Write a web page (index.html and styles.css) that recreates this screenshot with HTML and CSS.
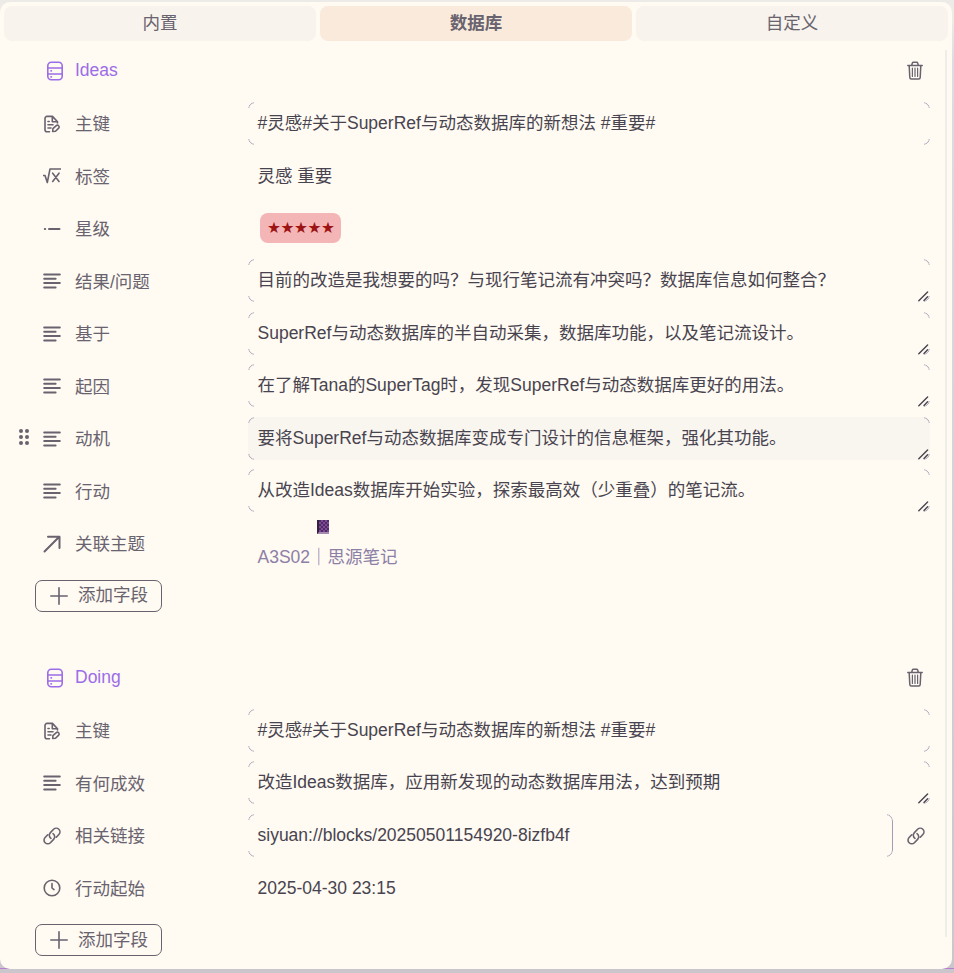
FILE: index.html
```
<!DOCTYPE html>
<html lang="zh-CN">
<head>
  <meta charset="utf-8">
  <meta name="viewport" content="width=device-width, initial-scale=1">
  <title>Ideas</title>
  <link rel="stylesheet" href="styles.css">
</head>
<body>
  <svg class="symbols">
    <symbol id="icon-database" viewBox="0 0 18 20">
      <rect x="1.8" y="1.2" width="14.4" height="17.6" rx="3.5"/>
      <path d="M2 7h14M2 13h14"/>
      <path d="M5 9.9h.4M5 15.9h.4"/>
    </symbol>
    <symbol id="icon-key" viewBox="0 0 18 18">
      <path d="M6.5 16.8H4a2 2 0 0 1-2-2V3.4a2 2 0 0 1 2-2h5.5l5 5.4V8M9.3 1.6v5.2h5M5 6.5h1.2M5 9.8h5M5 13h3"/>
      <path d="M9.7 16.5l.2-2.8 3.4-3a1.7 1.7 0 0 1 2.4 2.4l-3.2 3.2z"/>
    </symbol>
    <symbol id="icon-math" viewBox="0 0 18 18">
      <path d="M.5 8.5h1.5l2.3 7L7 2h10.5M9.7 6.2l6.3 8.3M16 6.2l-6.3 8.3"/>
    </symbol>
    <symbol id="icon-select" viewBox="0 0 18 18">
      <path d="M1.8 9h.4M6 9h10.5"/>
    </symbol>
    <symbol id="icon-text" viewBox="0 0 18 18">
      <path d="M1.2 2.5h15.6M1.2 6.8h11.4M1.2 11.1h15.6M1.2 15.4h11.4"/>
    </symbol>
    <symbol id="icon-relation" viewBox="0 0 18 18">
      <path d="M1.5 16.5L16 2M5 1.8H16.5V13"/>
    </symbol>
    <symbol id="icon-link" viewBox="0 0 18 18">
      <path d="M8 11.4a3.8 3.8 0 0 1-.6-5.8l3.2-3.3a3.7 3.7 0 0 1 5.3 5.2l-2.6 2.7M10 6.6a3.8 3.8 0 0 1 .6 5.8l-3.2 3.3a3.7 3.7 0 0 1-5.3-5.2l2.6-2.7"/>
    </symbol>
    <symbol id="icon-clock" viewBox="0 0 18 18">
      <circle cx="9" cy="9" r="7.8"/>
      <path d="M9 4.5V9l2 1.6"/>
    </symbol>
    <symbol id="icon-add" viewBox="0 0 18 18">
      <path d="M9 .8v16.4M.8 9h16.4"/>
    </symbol>
    <symbol id="icon-trash" viewBox="0 0 16 19">
      <path d="M.8 4.5h14.4M4.7 4.2l.6-2.1q.2-.9 1.2-.9h3q1 0 1.2.9l.6 2.1M2.2 4.8l.6 11.7q.1 1.5 1.4 1.5h7.6q1.3 0 1.4-1.5L13.8 4.8"/>
      <path class="thin" d="M5.4 7.2v8.3M8 7.2v8.3M10.6 7.2v8.3"/>
    </symbol>
    <symbol id="icon-drag" viewBox="0 0 12 18">
      <circle cx="3" cy="3" r="2"/><circle cx="9" cy="3" r="2"/>
      <circle cx="3" cy="9" r="2"/><circle cx="9" cy="9" r="2"/>
      <circle cx="3" cy="15" r="2"/><circle cx="9" cy="15" r="2"/>
    </symbol>
    <symbol id="icon-resize" viewBox="0 0 12 12">
      <path d="M.8 10.8l8.8-8.8M6 10.4l3.6-3.6"/>
    </symbol>
  </svg>

  <div class="panel">
    <nav class="tabs">
      <div class="tab">内置</div>
      <div class="tab tab-active">数据库</div>
      <div class="tab">自定义</div>
    </nav>

    <main class="content">
      <section class="database">
        <header>
          <svg class="icon-db"><use href="#icon-database"/></svg>
          <h2>Ideas</h2>
          <svg class="trash"><use href="#icon-trash"/></svg>
        </header>
        <div class="row">
          <div class="label"><svg class="icon"><use href="#icon-key"/></svg>主键</div>
          <div class="value field">#灵感#关于SuperRef与动态数据库的新想法 #重要#</div>
        </div>
        <div class="row">
          <div class="label"><svg class="icon"><use href="#icon-math"/></svg>标签</div>
          <div class="value">灵感 重要</div>
        </div>
        <div class="row">
          <div class="label"><svg class="icon bold"><use href="#icon-select"/></svg>星级</div>
          <div class="value"><span class="chip">★★★★★</span></div>
        </div>
        <div class="row">
          <div class="label"><svg class="icon bold"><use href="#icon-text"/></svg>结果/问题</div>
          <div class="value field">目前的改造是我想要的吗？与现行笔记流有冲突吗？数据库信息如何整合？<svg class="resize"><use href="#icon-resize"/></svg></div>
        </div>
        <div class="row">
          <div class="label"><svg class="icon bold"><use href="#icon-text"/></svg>基于</div>
          <div class="value field">SuperRef与动态数据库的半自动采集，数据库功能，以及笔记流设计。<svg class="resize"><use href="#icon-resize"/></svg></div>
        </div>
        <div class="row">
          <div class="label"><svg class="icon bold"><use href="#icon-text"/></svg>起因</div>
          <div class="value field">在了解Tana的SuperTag时，发现SuperRef与动态数据库更好的用法。<svg class="resize"><use href="#icon-resize"/></svg></div>
        </div>
        <div class="row">
          <svg class="drag"><use href="#icon-drag"/></svg>
          <div class="label"><svg class="icon bold"><use href="#icon-text"/></svg>动机</div>
          <div class="value field field-hover">要将SuperRef与动态数据库变成专门设计的信息框架，强化其功能。<svg class="resize"><use href="#icon-resize"/></svg></div>
        </div>
        <div class="row">
          <div class="label"><svg class="icon bold"><use href="#icon-text"/></svg>行动</div>
          <div class="value field">从改造Ideas数据库开始实验，探索最高效（少重叠）的笔记流。<svg class="resize"><use href="#icon-resize"/></svg></div>
        </div>
        <div class="row">
          <div class="label"><svg class="icon bold"><use href="#icon-relation"/></svg>关联主题</div>
          <div class="value relation">
            <span class="book"></span>
            <a>A3S02｜思源笔记</a>
          </div>
        </div>
        <button class="add"><svg class="icon"><use href="#icon-add"/></svg><span>添加字段</span></button>
      </section>

      <section class="database">
        <header>
          <svg class="icon-db"><use href="#icon-database"/></svg>
          <h2>Doing</h2>
          <svg class="trash"><use href="#icon-trash"/></svg>
        </header>
        <div class="row">
          <div class="label"><svg class="icon"><use href="#icon-key"/></svg>主键</div>
          <div class="value field">#灵感#关于SuperRef与动态数据库的新想法 #重要#</div>
        </div>
        <div class="row">
          <div class="label"><svg class="icon bold"><use href="#icon-text"/></svg>有何成效</div>
          <div class="value field">改造Ideas数据库，应用新发现的动态数据库用法，达到预期<svg class="resize"><use href="#icon-resize"/></svg></div>
        </div>
        <div class="row">
          <div class="label"><svg class="icon"><use href="#icon-link"/></svg>相关链接</div>
          <div class="value field field-link">siyuan://blocks/20250501154920-8izfb4f</div>
          <svg class="icon open-link"><use href="#icon-link"/></svg>
        </div>
        <div class="row">
          <div class="label"><svg class="icon"><use href="#icon-clock"/></svg>行动起始</div>
          <div class="value">2025-04-30 23:15</div>
        </div>
        <button class="add"><svg class="icon"><use href="#icon-add"/></svg><span>添加字段</span></button>
      </section>
    </main>
  </div>
</body>
</html>
```

FILE: styles.css
```
* {
  box-sizing: border-box;
}
body {
  margin: 0;
  height: 973px;
  padding: 2px 2px 4px 0;
  overflow: hidden;
  background: linear-gradient(#b57fd0 0 0) 0 968px / 100% 1px no-repeat,
    linear-gradient(#ecebe8 20px, #dedce2 60px, #cbc6cc);
  color: #48444f;
  font: 17.5px/24px "Liberation Sans", "Noto Sans CJK SC", sans-serif;
}
svg {
  flex: none;
  fill: none;
  stroke: #68636e;
  stroke-width: 1.6;
  stroke-linecap: round;
  stroke-linejoin: round;
}
.symbols {
  display: none;
}
.panel {
  height: 967px;
  padding: 4px;
  border-radius: 10px;
  background: #fffaf2;
}
.tabs {
  display: flex;
  gap: 4px;
}
.tab {
  flex: 1;
  height: 35px;
  border-radius: 8px;
  background: #f8f3ec;
  color: #68636e;
  line-height: 34px;
  text-align: center;
}
.tab-active {
  background: #faeadc;
  font-weight: bold;
}
.content {
  height: 887px;
  margin: 9px 1px 0 -4px;
  border-right: 2px solid #f0ece6;
}
.database:first-child {
  height: 607px;
}
header {
  display: flex;
  align-items: center;
  height: 40px;
  margin-bottom: 7px;
  padding: 0 22px 0 46px;
}
h2 {
  flex: 1;
  margin: 0 0 0 11px;
  color: #9c6de8;
  font-size: 17.5px;
  font-weight: normal;
}
.icon-db {
  width: 18px;
  height: 20px;
  margin-top: 2px;
  stroke: #9c6de8;
}
.trash {
  width: 16px;
  height: 19px;
  margin-top: 1px;
  stroke-width: 1.5;
}
.thin {
  stroke-width: 1.2;
}
.row {
  display: flex;
  position: relative;
  align-items: center;
  height: 52.5px;
  padding: 0 15px 0 43px;
}
.label {
  display: flex;
  align-items: center;
  gap: 14px;
  width: 205px;
  padding-top: 2px;
  color: #68636e;
}
.icon {
  width: 18px;
  height: 18px;
}
.label .icon {
  margin-top: -1px;
}
.bold {
  stroke-width: 2;
}
.value {
  position: relative;
  flex: 1;
  height: 43px;
  padding-left: 9.5px;
  line-height: 45px;
  white-space: nowrap;
}
.field {
  line-height: 43px;
}
.field::before {
  content: "";
  position: absolute;
  inset: 0;
  border: 1px solid #a49bb5;
  border-radius: 7px;
  /* only the corners of the outline stay visible */
  mask: linear-gradient(#000 0 0) 0 0 / 6px 6px,
    linear-gradient(#000 0 0) 100% 0 / 6px 6px,
    linear-gradient(#000 0 0) 0 100% / 6px 6px,
    linear-gradient(#000 0 0) 100% 100% / 6px 6px;
  mask-repeat: no-repeat;
}
.field-hover {
  border-radius: 7px;
  background: #f9f5ef;
}
.field-link::before {
  mask: linear-gradient(#000 0 0) 0 0 / 6px 6px,
    linear-gradient(#000 0 0) 0 100% / 6px 6px,
    linear-gradient(#000 0 0) 100% 0 / 6px 100%;
  mask-repeat: no-repeat;
}
.open-link {
  margin: 1px 5px 0 14px;
}
.resize {
  position: absolute;
  right: 0;
  bottom: 0;
  width: 12px;
  height: 12px;
  stroke: #48444f;
  stroke-width: 1.4;
}
.drag {
  position: absolute;
  left: 18px;
  top: 16px;
  width: 12px;
  height: 18px;
  fill: #68636e;
  stroke: none;
}
.chip {
  display: inline-block;
  width: 81px;
  height: 30px;
  margin: 6px 0 0 2.5px;
  padding-left: 7px;
  border-radius: 8px;
  background: #f4b5b7;
  color: #9c1414;
  font: 15.5px/30px "DejaVu Sans", sans-serif;
  letter-spacing: -0.4px;
  vertical-align: top;
}
.relation {
  display: flex;
  flex-direction: column;
  color: #8c80a6;
  line-height: 24px;
}
.book {
  flex: none;
  width: 12px;
  height: 14px;
  margin: -2px 0 11px 59px;
  border-left: 2px solid #33213f;
  border-bottom: 2px solid #a58bb0;
  background: repeating-conic-gradient(#8a4398 0 25%, #443164 0 50%) 0 0 / 4px 4px;
}
.add {
  display: flex;
  align-items: center;
  gap: 10px;
  width: 127px;
  height: 32px;
  margin: 10px 0 0 35px;
  padding: 0 0 0 14px;
  border: 1px solid #68636e;
  border-radius: 7px;
  background: none;
  color: #68636e;
  font: inherit;
}
.add span {
  margin-top: -1px;
}
```
